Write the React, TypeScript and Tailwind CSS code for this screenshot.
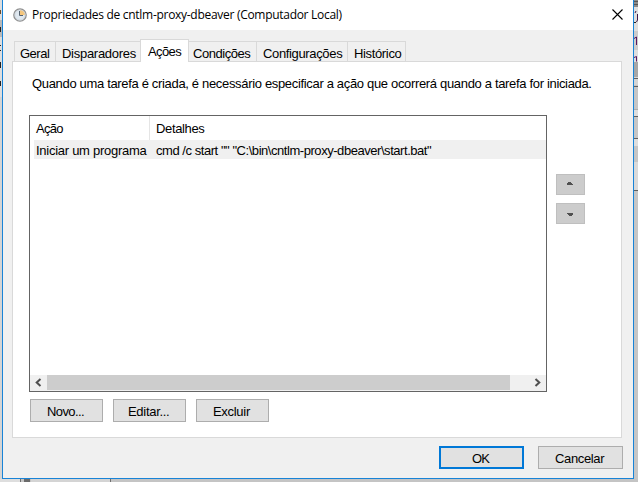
import React from "react";

const ui = "font-['Liberation_Sans',Arial,sans-serif] text-[13px] leading-[15px] whitespace-pre text-black";

function ClockIcon() {
  return (
    <svg width="14" height="14" viewBox="0 0 14 14" className="block">
      <circle cx="7" cy="7" r="6.2" fill="#dfe8f0" stroke="#8f8f8f" strokeWidth="1.3" />
      <path d="M7 7V1.8A5.2 5.2 0 0 1 12.2 7Z" fill="#f5c67c" />
      <circle cx="7" cy="7" r="5" fill="none" stroke="#c9d0d6" strokeWidth=".6" />
      <path d="M6.500 3v4.500H10" fill="none" stroke="#56626f" strokeWidth="1" />
    </svg>
  );
}

function Tab({ label, className, text }: { label: string; className: string; text: string }) {
  return (
    <div className={`h-[20px] border-t border-r border-[#d9d9d9] bg-[#f0f0f0] pt-[4px] ${className}`}>
      <span className={`block ${ui} ${text}`}>{label}</span>
    </div>
  );
}

function Button({ label, className, text }: { label: string; className: string; text: string }) {
  return (
    <button className={`flex h-[23px] bg-[#e1e1e1] ${className}`}>
      <span className={`block ${ui} ${text}`}>{label}</span>
    </button>
  );
}

function LeftBackdrop() {
  return (
    <div className="h-[479px] w-[2px] shrink-0 overflow-hidden bg-[#d4d4d4]">
      <svg width="2" height="479" className="block">
        <rect width="2" height="20" fill="#dedede" />
        <rect y="20" width="2" height="17" fill="#b9b9b9" />
        <rect y="37" width="2" height="60" fill="#dedede" />
        <path d="M0 10h1v4H0z" fill="#6b4a2a" />
        <path d="M0 27h1v5H0zM0 45h1v1H0zM0 50h1v1H0zM0 62h1v6H0zM0 81h1v5H0z" fill="#222" />
      </svg>
    </div>
  );
}

function RightBackdrop() {
  return (
    <svg width="4" height="479" className="block shrink-0">
      <rect width="4" height="479" fill="#c6c6c6" />
      <rect width="4" height="7" fill="#8a8a8a" />
      <path d="M0 1.5h4M0 4.5h4" stroke="#555" />
      <rect y="7" width="4" height="24" fill="#dedede" />
      <rect y="31" width="4" height="19" fill="#cccccc" />
      <rect y="50" width="4" height="12" fill="#dedede" />
      <rect y="62" width="4" height="15" fill="#a7a7a7" />
      <rect y="77" width="4" height="8" fill="#d5d5d5" />
      <path d="M0 78.5h4M0 86.5h4M0 116.5h4M0 138.5h4M0 190.5h4" stroke="#606060" />
      <path d="M0 109.5h4" stroke="#adadad" />
      <rect y="110" width="4" height="6" fill="#dedede" />
      <rect y="139" width="4" height="7" fill="#dedede" />
      <rect y="162" width="4" height="28" fill="#dadada" />
      <path d="M1 13l1-2M3.500 14v6l-1 2" stroke="#3c1648" fill="none" />
      <path d="M0 22.5h2" stroke="#222" />
      <path d="M0 38.500l2.500-1.500v8M0 57.500l2.500-1v5" stroke="#5a1660" fill="none" />
    </svg>
  );
}

export default function App() {
  return (
    <div className="h-[482px] w-[638px] overflow-hidden bg-[#c8c8c8]">
      <div className="flex h-[479px]">
        <LeftBackdrop />
        <main className="h-[479px] w-[632px] shrink-0 border-x border-b border-[#1883d7] bg-[#f0f0f0]">
          <header className="flex h-[30px] bg-white pl-[10px]">
            <div className="pt-[8px]"><ClockIcon /></div>
            <h1 className="ml-[5px] w-[560px] pt-[6px] font-['Open_Sans','Noto_Sans',sans-serif] text-[12px] leading-[17px] tracking-[-0.29px] whitespace-pre text-black">Propriedades de cntlm-proxy-dbeaver (Computador Local)</h1>
            <svg width="11" height="11" viewBox="0 0 11 11" className="mt-[9px] ml-[20px] block">
              <path d="M.5.500l10 10M10.500.500l-10 10" stroke="#000" strokeWidth="1.100" />
            </svg>
          </header>

          <nav className="flex h-[31px] items-end pl-[11px]">
            <Tab label="Geral" className="w-[42px] border-l pl-[5px]" text="tracking-[-0.5px]" />
            <Tab label="Disparadores" className="w-[84px] border-r-0 pl-[6px]" text="tracking-[-0.28px]" />
            <div className="z-10 -mb-px h-[23px] w-[49px] border-x border-t border-[#d9d9d9] bg-white pt-[4px] pl-[7px]">
              <span className={`block tracking-[-0.6px] ${ui}`}>Ações</span>
            </div>
            <Tab label="Condições" className="w-[68px] pl-[4px]" text="tracking-[-0.45px]" />
            <Tab label="Configurações" className="w-[91px] pl-[6px]" text="tracking-[-0.35px]" />
            <Tab label="Histórico" className="w-[58px] pl-[6px]" text="tracking-[-0.35px]" />
          </nav>

          <section className="ml-[9px] h-[377px] w-[610px] border border-[#d9d9d9] bg-white">
            <p className={`pt-[14px] pl-[19px] tracking-[-0.33px] ${ui}`}>Quando uma tarefa é criada, é necessário especificar a ação que ocorrerá quando a tarefa for iniciada.</p>
            <div className="mt-[24px] ml-[16px] flex">
              <div className="flex h-[277px] w-[518px] flex-col border border-[#646464] bg-white">
                <div className="flex h-[24px] pl-[6px]">
                  <div className={`w-[114px] border-r border-[#e5e5e5] pt-[5px] tracking-[-0.7px] ${ui}`}>Ação</div>
                  <div className={`pt-[5px] pl-[6px] tracking-[-0.35px] ${ui}`}>Detalhes</div>
                </div>
                <div className="ml-[4px] flex h-[19px] bg-[#f0f0f0] pt-[3px] pl-[2px]">
                  <div className={`w-[120px] tracking-[-0.27px] ${ui}`}>Iniciar um programa</div>
                  <div className={`tracking-[-0.45px] ${ui}`}>{'cmd /c start "" "C:\\bin\\cntlm-proxy-dbeaver\\start.bat"'}</div>
                </div>
                <div className="mt-auto flex h-[16px] bg-[#f0f0f0]">
                  <svg width="17" height="15" viewBox="0 0 17 15"><path d="M10.500 4L6.700 7.500L10.500 11" fill="none" stroke="#505050" strokeWidth="2" /></svg>
                  <div className="h-[15px] w-[463px] bg-[#cdcdcd]" />
                  <svg width="36" height="15" viewBox="0 0 36 15"><path d="M25.500 4l3.800 3.500l-3.800 3.500" fill="none" stroke="#505050" strokeWidth="2" /></svg>
                </div>
              </div>
              <div className="mt-[59px] ml-[9px] flex flex-col gap-[8px]">
                <button className="flex h-[21px] w-[29px] border border-[#bfbfbf] bg-[#cccccc] pt-[7px] pl-[10px]">
                  <svg width="6" height="3" viewBox="0 0 6 3" shapeRendering="crispEdges"><path d="M2 0h2v1h1v1h1v1H0V2h0V1h1V0z" fill="#505050" /></svg>
                </button>
                <button className="flex h-[21px] w-[29px] border border-[#bfbfbf] bg-[#cccccc] pt-[9px] pl-[10px]">
                  <svg width="6" height="3" viewBox="0 0 6 3" shapeRendering="crispEdges"><path d="M0 0h6v2H5v1H2V2H1V1H0z" fill="#505050" /></svg>
                </button>
              </div>
            </div>
            <div className="mt-[7px] ml-[17px] flex gap-[10px]">
              <Button label="Novo..." className="w-[73px] border border-[#adadad] pt-[4px] pl-[16px]" text="tracking-[-0.6px]" />
              <Button label="Editar..." className="w-[73px] border border-[#adadad] pt-[4px] pl-[14px]" text="tracking-[-0.3px]" />
              <Button label="Excluir" className="w-[73px] border border-[#adadad] pt-[4px] pl-[16px]" text="tracking-[-0.3px]" />
            </div>
          </section>

          <footer className="mt-[8px] flex gap-[14px] pl-[436px]">
            <Button label="OK" className="w-[85px] border-2 border-[#0078d7] pt-[3px] pl-[31px]" text="tracking-[-0.8px]" />
            <Button label="Cancelar" className="w-[85px] border border-[#adadad] pt-[4px] pl-[16px]" text="tracking-[-0.35px]" />
          </footer>
        </main>
        <RightBackdrop />
      </div>
      <svg width="638" height="3" className="block">
        <rect width="638" height="3" fill="#c4c4c4" />
        <rect width="20" height="3" fill="#dedede" />
        <rect x="31" width="79" height="3" fill="#d4d4d4" />
        <path d="M20.500 0v3M110.500 0v3" stroke="#707070" />
        <rect x="24" width="6" height="3" fill="#6b6b6b" />
      </svg>
    </div>
  );
}
